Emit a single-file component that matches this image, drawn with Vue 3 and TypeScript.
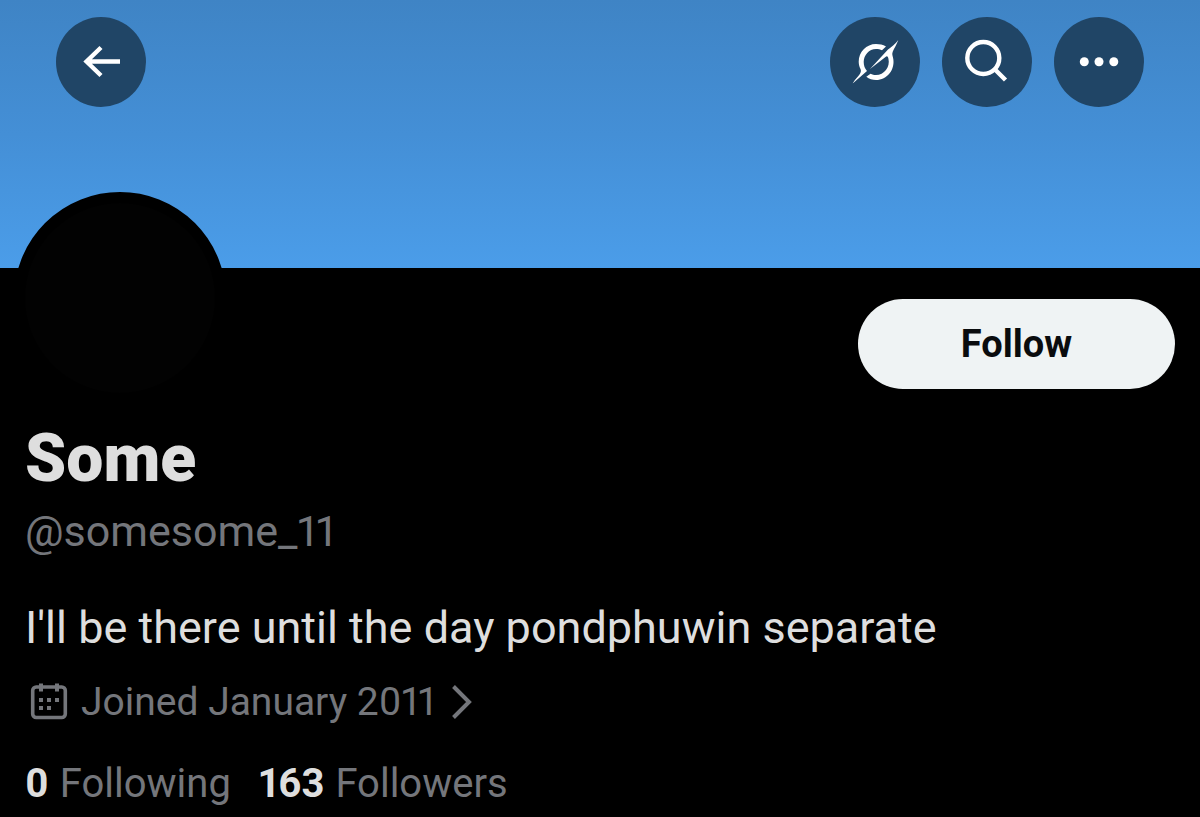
<script setup lang="ts">
interface Stat {
  count: number
  label: string
}

const profile = {
  name: 'Some',
  handle: '@somesome_11',
  bio: "I'll be there until the day pondphuwin separate",
  joined: 'Joined January 2011',
}

const stats: Stat[] = [
  { count: 0, label: 'Following' },
  { count: 163, label: 'Followers' },
]
</script>

<template>
  <main class="page">
    <header class="banner">
      <button class="round" type="button" aria-label="Back">
        <svg viewBox="0 0 90 90" fill="none" stroke="#fff" stroke-width="4.400">
          <path d="M64 44.500H30M45 30.500L30.500 44.500L45 58.500" />
        </svg>
      </button>
      <nav class="actions" aria-label="Profile actions">
        <button class="round" type="button" aria-label="Grok">
          <svg viewBox="0 0 90 90" fill="#fff">
            <path d="M56 29.500C53 27.700 49.500 27 46 27C36.400 27 28.700 35 28.700 44.700C28.700 47.500 29.500 50 30.500 52C31.700 55 30 57 27.500 60C25.700 62 24 64 22.700 66.500L37 54C34.800 51.500 33.700 48.500 33.700 45C33.700 38 39 31.900 46 31.900C48.300 31.900 50.300 32.400 52 33.200Z" />
            <path d="M40 52L58 32.500C61.500 30 65.500 27 68.300 23C66.500 27.500 64.500 31 62.800 34.500C61.800 36.800 62.500 38.500 63 40.500C65.800 52.500 57 63 46 63C42.500 63 39.200 61.800 36.300 59.700L40.500 56.700C42.300 57.600 44 58.100 46 58.100C54 58.100 60.500 50 58.400 41.500C57.900 39.300 57 38.700 55.500 39.900Z" />
          </svg>
        </button>
        <button class="round" type="button" aria-label="Search">
          <svg viewBox="0 0 90 90" fill="none" stroke="#fff" stroke-width="4.400">
            <circle cx="41.300" cy="41" r="16" />
            <path d="M52.500 52L63.500 63" />
          </svg>
        </button>
        <button class="round" type="button" aria-label="More">
          <svg viewBox="0 0 90 90" fill="#fff">
            <circle cx="30.300" cy="44.800" r="4.500" />
            <circle cx="45" cy="44.800" r="4.500" />
            <circle cx="59.800" cy="44.800" r="4.500" />
          </svg>
        </button>
      </nav>
    </header>

    <section class="profile">
      <div class="top">
        <div class="avatar" role="img" aria-label="Profile picture"></div>
        <button class="follow" type="button">Follow</button>
      </div>
      <h1 class="name">{{ profile.name }}</h1>
      <p class="handle">{{ profile.handle }}</p>
      <p class="bio">{{ profile.bio }}</p>
      <a class="joined" href="#about">
        <svg class="calendar" viewBox="0 0 40 40" fill="none" stroke="currentColor">
          <rect x="3.700" y="5" width="32.600" height="30.500" rx="3.500" stroke-width="3.600" />
          <path d="M12 1.500V9.500M28 1.500V9.500M10 18H14M18 18H22M26 18H30M10 26H14M18 26H22" stroke-width="4" />
        </svg>
        <span>{{ profile.joined }}</span>
        <svg class="chevron" viewBox="0 0 22 40" fill="none" stroke="currentColor" stroke-width="4">
          <path d="M2.500 4.500L18 20L2.500 35.500" />
        </svg>
      </a>
      <div class="stats">
        <a v-for="stat in stats" :key="stat.label" class="stat" :href="'#' + stat.label.toLowerCase()">
          <strong>{{ stat.count }}</strong>
          <span>{{ stat.label }}</span>
        </a>
      </div>
    </section>
  </main>
</template>

<style>
body {
  margin: 0;
  background: #000;
}
</style>

<style scoped>
.page {
  min-height: 100vh;
  background: #000;
  color: #dedede;
  font-family: Roboto, "Liberation Sans", sans-serif;
  font-variant-numeric: proportional-nums;
}

.banner {
  display: flex;
  justify-content: space-between;
  align-items: flex-start;
  box-sizing: border-box;
  height: 268px;
  padding: 17px 56px;
  background: linear-gradient(#3f84c5, #448fd6 50%, #4b9de9);
}

.actions {
  display: flex;
  gap: 22px;
}

.round {
  width: 90px;
  height: 90px;
  padding: 0;
  border: 0;
  border-radius: 50%;
  background: #204566;
  cursor: pointer;
}

.round svg {
  display: block;
  width: 90px;
  height: 90px;
}

.profile {
  padding: 0 25px 8px;
}

.top {
  display: flex;
  justify-content: space-between;
  align-items: flex-start;
}

.avatar {
  box-sizing: border-box;
  width: 212px;
  height: 212px;
  margin: -76px 0 0 -11px;
  border: 11px solid #000;
  border-radius: 50%;
  background: #020202;
}

.follow {
  width: 317px;
  height: 90px;
  margin-top: 31px;
  border: 0;
  border-radius: 45px;
  background: #eff3f4;
  color: #0a0c0e;
  font: 700 38px Roboto, "Liberation Sans", sans-serif;
  cursor: pointer;
}

.name {
  margin: 15px 0 0;
  font-size: 66px;
  line-height: 80px;
  font-weight: 900;
}

.handle {
  margin: 4px 0 0;
  color: #74767b;
  font-size: 43px;
  line-height: 56px;
}

.bio {
  margin: 41px 0 0;
  font-size: 45px;
  line-height: 56px;
}

.joined {
  display: flex;
  align-items: center;
  width: fit-content;
  margin: 22px 0 0 4px;
  color: #74767b;
  font-size: 39px;
  line-height: 48px;
  text-decoration: none;
}

.calendar {
  width: 40px;
  height: 40px;
  margin-right: 12px;
}

.chevron {
  width: 22px;
  height: 40px;
  margin-left: 16px;
}

.stats {
  display: flex;
  gap: 28px;
  margin-top: 34px;
  font-size: 40px;
  line-height: 48px;
}

.stat {
  display: flex;
  gap: 11px;
  color: #74767b;
  text-decoration: none;
}

.stat strong {
  color: #dedede;
}
</style>
